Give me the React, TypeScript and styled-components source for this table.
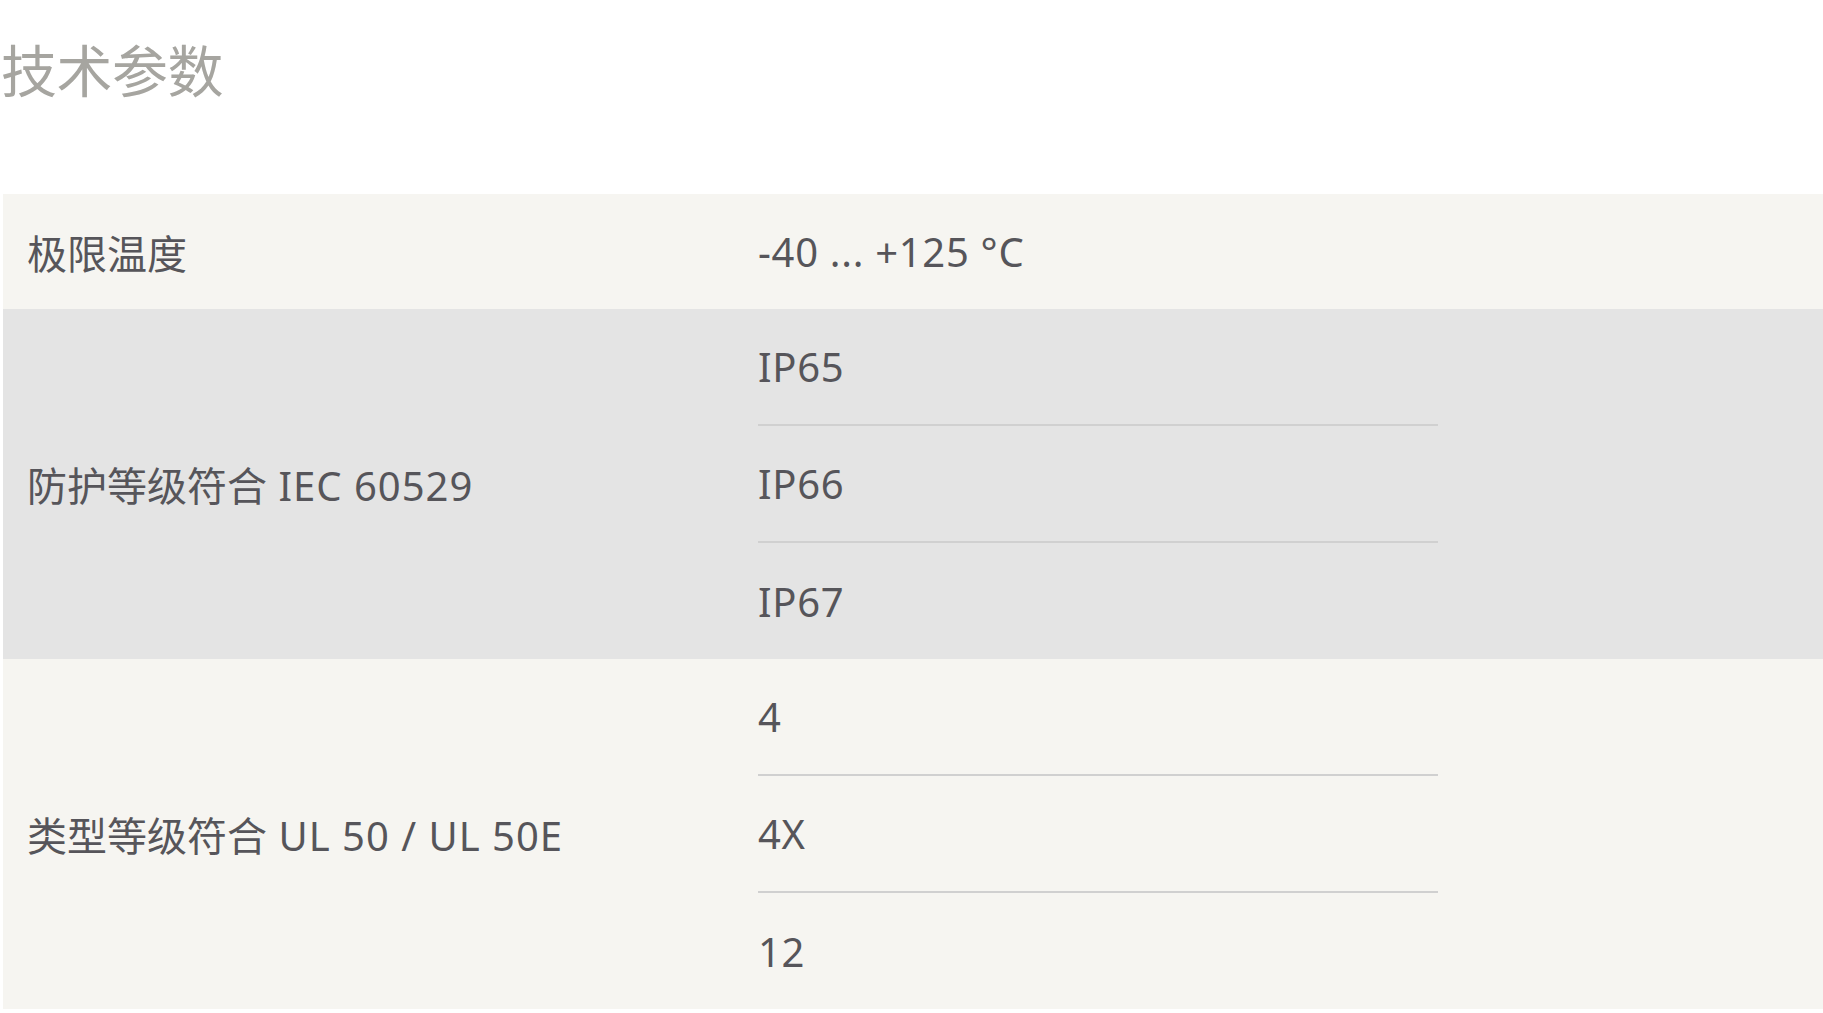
import React from "react";
import styled, { createGlobalStyle } from "styled-components";

const GlobalStyle = createGlobalStyle`
  html, body {
    margin: 0;
    padding: 0;
    background: #ffffff;
  }
  body {
    font-family: "Noto Sans", "Noto Sans CJK SC", sans-serif;
  }
`;

const Page = styled.div`
  padding: 34px 0 0 3px;
  width: 1820px;
`;

const Title = styled.h1`
  margin: 0 0 0 -2px;
  font-family: "Noto Sans CJK SC", "Noto Sans", sans-serif;
  font-size: 56px;
  line-height: 67px;
  font-weight: 400;
  color: #a6a5a0;
  letter-spacing: -0.5px;
`;

const Table = styled.div`
  margin-top: 93px;
  display: flex;
  flex-direction: column;
`;

type Tone = "light" | "grey";

const Row = styled.div<{ $tone: Tone }>`
  display: grid;
  grid-template-columns: 755px 680px;
  background: ${(p) => (p.$tone === "grey" ? "#e4e4e4" : "#f6f5f1")};
`;

const Label = styled.div`
  display: flex;
  align-items: center;
  padding-left: 24px;
  font-size: 40px;
  color: #56555a;
  font-family: "Noto Sans", "Noto Sans CJK SC", sans-serif;
`;

const LabelText = styled.span`
  white-space: pre;
`;

const Latin = styled.span`
  letter-spacing: 1px;
`;

const ValueList = styled.div`
  display: flex;
  flex-direction: column;
`;

const Value = styled.div<{ $tone: Tone }>`
  height: 115px;
  display: flex;
  align-items: center;
  font-size: 40px;
  color: #56555a;
  font-family: "Noto Sans", "Noto Sans CJK SC", sans-serif;
  letter-spacing: 0.7px;

  & + & {
    border-top: 2px solid ${(p) => (p.$tone === "grey" ? "#d0d0d0" : "#e2e1dd")};
  }
  &:last-child:not(:first-child) {
    height: 116px;
  }
`;

const rows: { label: string; latin: string; values: string[]; tone: Tone }[] = [
  { label: "极限温度", latin: "", values: ["-40 ... +125 °C"], tone: "light" },
  { label: "防护等级符合", latin: " IEC 60529", values: ["IP65", "IP66", "IP67"], tone: "grey" },
  { label: "类型等级符合", latin: " UL 50 / UL 50E", values: ["4", "4X", "12"], tone: "light" },
];

export default function App() {
  return (
    <>
      <GlobalStyle />
      <Page>
        <Title>技术参数</Title>
        <Table>
          {rows.map((r) => (
            <Row key={r.label} $tone={r.tone}>
              <Label>
                <LabelText>
                  {r.label}
                  {r.latin && <Latin>{r.latin}</Latin>}
                </LabelText>
              </Label>
              <ValueList>
                {r.values.map((v) => (
                  <Value key={v} $tone={r.tone}>
                    {v}
                  </Value>
                ))}
              </ValueList>
            </Row>
          ))}
        </Table>
      </Page>
    </>
  );
}
